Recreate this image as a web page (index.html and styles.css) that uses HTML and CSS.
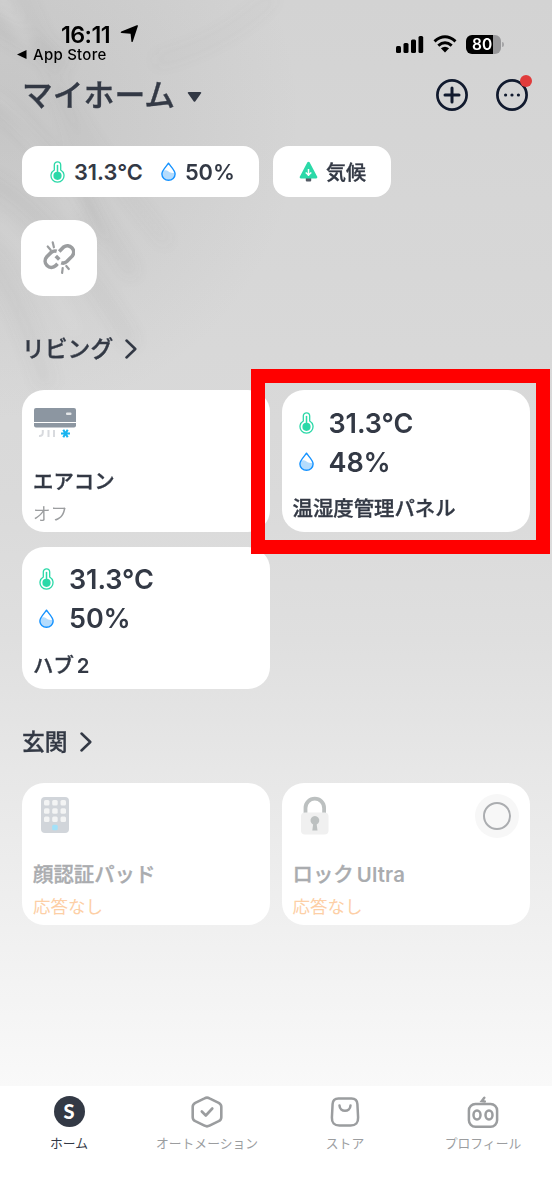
FILE: index.html
```html
<!DOCTYPE html>
<html lang="ja">
<head>
<meta charset="utf-8">
<title>マイホーム</title>
<link rel="stylesheet" href="styles.css">
</head>
<body>
<svg class="defs" width="0" height="0" aria-hidden="true">
  <symbol id="thermo" viewBox="0 0 15 22">
    <path d="M4.3 9V4a3.2 3.2 0 0 1 6.4 0v5a6.5 6.5 0 1 1-6.4 0z" fill="#fff" stroke="#2bd9a8" stroke-width="1.3"/>
    <circle cx="7.5" cy="14.8" r="4.1" fill="#2bd9a8"/>
    <path d="M7.5 15V4.6" stroke="#2bd9a8" stroke-width="1.5" stroke-linecap="round"/>
  </symbol>
  <symbol id="drop" viewBox="0 0 15 19">
    <path d="M1.2 10.3C3 7.5 5.6 7.8 7.2 9.2s4.3 2.2 6.4 1.3C15 15 11.5 18 7.5 18S.5 15 1.2 10.3z" fill="#b4dcfd"/>
    <path d="M7.5 1.2C5.5 4.4.9 8.2.9 12a6.600 6.300 0 0 0 13.200 0C14.100 8.200 9.500 4.400 7.500 1.200z" fill="none" stroke="#1492ff" stroke-width="1.400" stroke-linejoin="round"/>
  </symbol>
  <symbol id="chevron" viewBox="0 0 12 20">
    <path d="M1.500 1.500L10.300 10L1.500 18.500" fill="none" stroke="#333945" stroke-width="2.500" stroke-linecap="round" stroke-linejoin="round"/>
  </symbol>
</svg>

<div class="phone">
  <svg class="backdrop" viewBox="0 0 552 560" aria-hidden="true">
    <defs>
      <filter id="soft" x="-30%" y="-30%" width="160%" height="160%"><feGaussianBlur stdDeviation="7"/></filter>
      <radialGradient id="shade" gradientUnits="userSpaceOnUse" cx="0" cy="120" r="300"><stop offset="0" stop-color="#888" stop-opacity=".2"/><stop offset="1" stop-color="#888" stop-opacity="0"/></radialGradient>
    </defs>
    <rect width="552" height="560" fill="url(#shade)"/>
    <g filter="url(#soft)" fill="none" stroke="#777" stroke-linecap="round">
      <path d="M-10 20L60 60" stroke-width="20" opacity=".07"/>
      <path d="M20 -10Q60 70 100 240" stroke-width="10" opacity=".06"/>
      <path d="M-10 100Q60 150 130 270" stroke-width="14" opacity=".07"/>
      <path d="M60 90Q100 160 165 240" stroke-width="9" opacity=".06"/>
      <path d="M-10 180Q60 220 130 340" stroke-width="14" opacity=".07"/>
      <path d="M-10 260Q20 300 45 380" stroke-width="18" opacity=".06"/>
      <path d="M160 60Q220 45 270 0" stroke-width="12" opacity=".04"/>
    </g>
    <g filter="url(#soft)" fill="none" stroke="#fff" stroke-linecap="round">
      <path d="M0 0L30 45" stroke-width="9" opacity=".22"/>
      <path d="M-5 95Q40 140 75 210" stroke-width="8" opacity=".2"/>
      <path d="M-5 220Q40 260 75 330" stroke-width="8" opacity=".15"/>
    </g>
  </svg>

  <header class="status">
    <div class="status-left">
      <div class="clock">
        <span class="time">16:11</span>
        <svg width="19" height="18" viewBox="0 0 19 18"><path d="M18 .8L12.800 16.500c-.3.800-1.300.8-1.400 0L10.600 8.800 1.500 8.100C.5 8 .4 7 1.300 6.600L16.800.3c.7-.3 1.400-.2 1.200.5z"/></svg>
      </div>
      <div class="back"><svg width="10" height="9" viewBox="0 0 10 9"><path d="M0 4.500L9.500 0v9z"/></svg><span>App Store</span></div>
    </div>
    <div class="status-right">
      <svg width="28" height="18" viewBox="0 0 28 18"><rect y="11" width="5" height="7" rx="1.500"/><rect x="7.500" y="8" width="5" height="10" rx="1.500"/><rect x="15" y="4.500" width="5" height="13.500" rx="1.500"/><rect x="22.500" y="1" width="4.700" height="17" rx="1.500"/></svg>
      <svg width="24" height="18" viewBox="0 0 24 18"><g fill="none" stroke="#000" stroke-width="3"><path d="M1.500 6.300Q12-2.800 22.500 6.300"/><path d="M5.300 10.600Q12 5 18.700 10.600"/></g><path d="M7.900 13.300Q12 10 16.100 13.300L12 17.600z"/></svg>
      <div class="battery"><span>80</span></div>
    </div>
  </header>

  <div class="titlebar">
    <h1>マイホーム</h1>
    <svg class="caret" width="15" height="12" viewBox="0 0 15 12"><path d="M1.500 1h12a.8.8 0 0 1 .6 1.300L8.200 10.500a1 1 0 0 1-1.400 0L.9 2.300A.8.800 0 0 1 1.500 1z" fill="#333945"/></svg>
    <div class="actions">
      <svg width="32" height="32" viewBox="0 0 32 32"><circle cx="16" cy="16" r="14.600" fill="none" stroke="#111a2e" stroke-width="2.700"/><path d="M16 9v14M9 16h14" stroke="#111a2e" stroke-width="3" stroke-linecap="round"/></svg>
      <div class="more"><svg width="32" height="32" viewBox="0 0 32 32"><circle cx="16" cy="16" r="14.600" fill="none" stroke="#111a2e" stroke-width="2.700"/><g fill="#111a2e"><circle cx="9.600" cy="16" r="1.600"/><circle cx="16" cy="16" r="1.600"/><circle cx="22.400" cy="16" r="1.600"/></g></svg><i class="dot"></i></div>
    </div>
  </div>

  <div class="chips">
    <div class="chip climate">
      <svg width="15" height="22"><use href="#thermo"/></svg><span class="num">31.3°C</span>
      <svg class="chip-drop" width="15" height="19"><use href="#drop"/></svg><span class="num">50%</span>
    </div>
    <div class="chip scene">
      <svg width="19" height="22" viewBox="0 0 19 22"><path d="M6.800 16h5.400v3.500a1 1 0 0 1-1 1H7.800a1 1 0 0 1-1-1z" fill="#555b66"/><path d="M8.400 1.300a1.300 1.300 0 0 1 2.200 0l7.500 14.200a1.200 1.200 0 0 1-1.100 1.900H2a1.200 1.200 0 0 1-1.100-1.900z" fill="#2bd9a8"/><path d="M9.500 8v7M6.700 11.500L9.500 14l2.800-2.500" fill="none" stroke="#fff" stroke-width="1.500"/></svg>
      <span>気候</span>
    </div>
  </div>

  <div class="link-tile">
    <svg width="32" height="36" viewBox="0 0 32 36" fill="none" stroke="#9b9d9f" stroke-linecap="round">
      <g stroke-width="3.600" stroke-linecap="butt"><path d="M16.200 11.500l4.500-4.500a6.300 6.300 0 0 1 8.700 8.900l-5.600 5.600a5.500 5.500 0 0 1-5.600 1.200"/><path d="M14.500 23.800l-1.800 1.900a6.300 6.300 0 0 1-8.900-8.900l4.600-4.600a6 6 0 0 1 5.300-1"/><path d="M12.800 16l3.500 3.500"/></g>
      <path d="M4.700 6.500l3 3.400M9.700 2.300l1.200 5M19.700 28l-.6 5M23.300 26l2.500 3" stroke-width="2.200"/>
    </svg>
  </div>

  <h2 class="living"><span>リビング</span><svg width="12" height="20"><use href="#chevron"/></svg></h2>
  <div class="cards">
    <section class="card">
      <svg class="ac" width="42" height="31" viewBox="0 0 42 31">
        <path d="M2 0h38a2 2 0 0 1 2 2v12H0V2a2 2 0 0 1 2-2z" fill="#8c96a1"/><path d="M0 15h42v2.500a2 2 0 0 1-2 2H2a2 2 0 0 1-2-2z" fill="#8c96a1"/><rect x="32" y="4.500" width="5.500" height="2.500" rx="1" fill="#e4e6e8"/>
        <path d="M5 28q3.800.3 3.800-3.500V22M14.500 22v7M20 22v7" fill="none" stroke="#d8dade" stroke-width="2"/>
        <path d="M27 25.500h9M29.300 21.800l4.400 7.400M33.700 21.800l-4.400 7.400" stroke="#18b4f0" stroke-width="2.100"/>
      </svg>
      <h3>エアコン</h3><p>オフ</p>
    </section>
    <section class="card meter highlighted">
      <div class="reading"><svg width="15" height="22"><use href="#thermo"/></svg><span>31.3°C</span></div>
      <div class="reading"><svg width="15" height="19"><use href="#drop"/></svg><span>48%</span></div>
      <h3>温湿度管理パネル</h3>
    </section>
    <section class="card meter">
      <div class="reading"><svg width="15" height="22"><use href="#thermo"/></svg><span>31.3°C</span></div>
      <div class="reading"><svg width="15" height="19"><use href="#drop"/></svg><span>50%</span></div>
      <h3>ハブ<span class="latin">2</span></h3>
    </section>
  </div>

  <h2 class="entrance"><span>玄関</span><svg width="12" height="20"><use href="#chevron"/></svg></h2>
  <div class="cards">
    <section class="card offline">
      <svg class="device" width="28" height="36" viewBox="0 0 28 36"><rect width="28" height="36" rx="4" fill="#d1d5da"/><g fill="#f3f4f4"><rect x="3" y="3" width="5.500" height="5.500" rx="1.500"/><rect x="11.200" y="3" width="5.500" height="5.500" rx="1.500"/><rect x="19.500" y="3" width="5.500" height="5.500" rx="1.500"/><rect x="3" y="11.200" width="5.500" height="5.500" rx="1.500"/><rect x="11.200" y="11.200" width="5.500" height="5.500" rx="1.500"/><rect x="19.500" y="11.200" width="5.500" height="5.500" rx="1.500"/><rect x="3" y="19.500" width="5.500" height="5.500" rx="1.500"/><rect x="11.200" y="19.500" width="5.500" height="5.500" rx="1.500"/><rect x="19.500" y="19.500" width="5.500" height="5.500" rx="1.500"/></g><rect x="11.200" y="27.700" width="5.500" height="5.500" rx="1.500" fill="#a2e1f9"/></svg>
      <h3>顔認証パッド</h3><p>応答なし</p>
    </section>
    <section class="card offline">
      <svg class="device lock" width="28" height="39" viewBox="0 0 28 39"><path d="M4.500 18v-6a9.300 9.300 0 0 1 18.600 0v6" fill="none" stroke="#bcc0c0" stroke-width="3.800"/><rect y="16.500" width="27.500" height="22" rx="4" fill="#f0f0f0"/><path d="M11.300 34.500l.8-6a4.400 4.400 0 1 1 3.600 0l.8 6z" fill="#bcc0c0"/></svg>
      <div class="lock-button"></div>
      <h3>ロック<span class="latin">Ultra</span></h3><p>応答なし</p>
    </section>
  </div>

  <nav class="tabs">
    <div class="tab active"><div class="s-logo">S</div><span>ホーム</span></div>
    <div class="tab"><svg width="32" height="32" viewBox="0 0 32 32" fill="none" stroke="#9b9d9f" stroke-width="2.600" stroke-linecap="round" stroke-linejoin="round"><path d="M13.500 2.300q2.500-1.300 5 0l9.200 4.500q2.600 1.400 2.600 4v10.400q0 2.600-2.600 4l-9.200 4.500q-2.500 1.300-5 0l-9.200-4.500q-2.600-1.400-2.600-4V10.800q0-2.600 2.600-4z"/><path d="M10.800 15.500l4 4 6.500-7"/></svg><span>オートメーション</span></div>
    <div class="tab"><svg width="32" height="32" viewBox="0 0 32 32" fill="none" stroke="#9b9d9f" stroke-width="2.500" stroke-linecap="round"><path d="M9.500 2.400h13q5.600 0 5.900 5.600l.7 13.500q.3 8-7.500 8H10.400q-7.800 0-7.500-8L3.600 8q.3-5.600 5.900-5.600z"/><path d="M10.500 9.500c.3 7 10.700 7 11 0"/></svg><span>ストア</span></div>
    <div class="tab"><svg width="32" height="32" viewBox="0 0 32 32" fill="none" stroke="#9b9d9f" stroke-width="2.500" stroke-linecap="round"><rect x="1.900" y="8" width="28.200" height="22.700" rx="6.500"/><ellipse cx="10" cy="19" rx="3.500" ry="4.500"/><ellipse cx="22" cy="19" rx="3.500" ry="4.500"/><path d="M17.300 1.800l-2.500 3.200 3 .5"/></svg><span>プロフィール</span></div>
  </nav>
</div>
</body>
</html>
```
FILE: styles.css
```css
* { box-sizing: border-box; }
body, h1, h2, h3, p { margin: 0; }
body { font-family: Inter, "Noto Sans CJK JP", sans-serif; color: #333945; }
svg { display: block; flex: none; }
.defs { position: absolute; }

.phone {
  position: relative;
  width: 552px;
  height: 1200px;
  display: flex;
  flex-direction: column;
  overflow: hidden;
  isolation: isolate;
  background: linear-gradient(#d3d3d3 0, #d6d6d6 200px, #dadada 500px, #dfdfdf 640px, #e7e7e7 770px, #f0f0f0 930px, #f9f9f9 1086px);
}
.backdrop { position: absolute; z-index: -1; top: 0; left: 0; width: 552px; height: 560px; }

.status { height: 68px; display: flex; justify-content: space-between; padding: 22px 51px 0 17px; color: #000; }
.clock { display: flex; align-items: center; gap: 10px; height: 24px; padding-left: 44px; }
.time { font-size: 23.300px; font-weight: 600; letter-spacing: -.6px; line-height: 24px; padding-top: 1px; }
.back { display: flex; align-items: center; gap: 6px; height: 17px; font-size: 15px; font-weight: 500; letter-spacing: .25px; }
.status-right { display: flex; align-items: center; gap: 9px; height: 44px; }
.battery {
  position: relative;
  width: 35px; height: 19px;
  border-radius: 6px;
  background: linear-gradient(90deg, #000 27px, #98989a 27px);
  color: #fff;
  font-size: 15.500px; font-weight: 600; line-height: 19px;
  padding-left: 6px;
}
.battery::after { content: ""; position: absolute; left: 36px; top: 7px; width: 2px; height: 5px; border-radius: 0 2px 2px 0; background: #a5a5a7; }

.titlebar { height: 54px; display: flex; align-items: center; padding: 0 24px 0 22px; }
h1 { font-size: 30.800px; font-weight: 500; line-height: 40px; }
.caret { margin: 4px 0 0 12px; }
h1, h2, h3, .scene { -webkit-text-stroke: .35px currentColor; }
.actions { margin-left: auto; display: flex; gap: 28px; }
.more { position: relative; }
.dot { position: absolute; right: -4px; top: -4px; width: 12px; height: 12px; border-radius: 50%; background: #e03b3b; }

.chips { display: flex; gap: 14px; margin: 24px 0 0 22px; height: 51px; }
.chip { display: flex; align-items: center; border-radius: 16px; background: #fff; font-size: 20px; font-weight: 500; }
.climate { width: 237px; padding-left: 28px; }
.scene { width: 118px; padding-left: 26px; gap: 8px; }
.num { font-size: 21.800px; font-weight: 600; margin-left: 9px; }
.chip-drop { margin-left: 18px; }

.link-tile { width: 76px; height: 76px; margin: 23px 0 0 21px; border-radius: 22px; background: #fff; display: grid; place-items: center; }

h2 { display: flex; align-items: center; gap: 12px; height: 32px; font-size: 22.800px; font-weight: 500; line-height: 32px; margin-left: 22px; }
.living { margin-top: 37px; margin-bottom: 25px; }
.entrance { margin-top: 37px; margin-bottom: 25px; }

.cards { display: grid; grid-template-columns: 248px 248px; grid-auto-rows: 142px; gap: 14.500px 11.500px; margin-left: 22px; }
.card { position: relative; display: flex; flex-direction: column; border-radius: 22px; background: #fff; padding: 18px 11px 0; }
.highlighted { z-index: 1; }
.highlighted::after { content: ""; position: absolute; inset: -21.500px -20.500px -21.500px -31px; border: 14px solid #f00; }
h3 { font-size: 20.400px; font-weight: 500; line-height: 28px; }
.card p { font-size: 17.500px; line-height: 24px; color: #9b9d9f; margin-top: 6px; }
.card h3 { margin-top: auto; }
.card:not(.meter) { padding-bottom: 6px; }
.card.meter { padding: 13px 11px 9px; }
.ac { margin-left: 1px; }
.latin { margin-left: 3px; font-weight: 600; -webkit-text-stroke: 0; letter-spacing: .2px; }
.reading { display: flex; align-items: center; gap: 15px; height: 39px; padding-left: 6px; font-size: 27px; font-weight: 600; letter-spacing: -.1px; }
.reading span { padding-top: 1px; }

.offline { color: #aaacaf; }
.card.offline p { color: #fdcfa6; }
.card.offline { padding-top: 14px; }
.device { margin: 0 0 0 8px; }
.lock { margin-top: -1px; }
.lock-button { position: absolute; right: 11px; top: 11px; width: 44px; height: 44px; border-radius: 50%; background: #f7f7f7; display: grid; place-items: center; }
.lock-button::after { content: ""; width: 24px; height: 24px; border: 2px solid #abadb0; border-radius: 50%; }

.tabs { margin-top: auto; height: 114px; background: #fff; display: grid; grid-template-columns: repeat(4, 1fr); padding-top: 10px; }
.tab { display: flex; flex-direction: column; align-items: center; gap: 6px; font-size: 12.800px; line-height: 20px; color: #9b9d9f; }
.active { color: #333945; }
.s-logo { width: 31px; height: 31px; margin-bottom: 1px; border-radius: 50%; background: #333945; color: #fff; font-family: Lato, sans-serif; font-size: 20px; font-weight: 900; line-height: 31px; text-align: center; }
```
